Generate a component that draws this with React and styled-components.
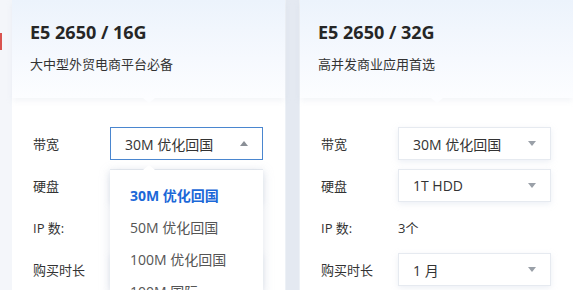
import styled, { createGlobalStyle } from "styled-components";

const GlobalStyle = createGlobalStyle`
  html, body {
    margin: 0;
    padding: 0;
    background: #f4f6fa;
  }
  body {
    font-family: "Open Sans", "Noto Sans CJK SC", sans-serif;
    color: #333;
  }
`;

const Page = styled.div`
  display: flex;
  height: 290px;
  width: 573px;
  overflow: hidden;
  background: #f4f6fa;
`;

const Gutter = styled.div`
  width: 12px;
  flex-shrink: 0;
  padding-top: 33px;
`;

const Tag = styled.div`
  width: 2px;
  height: 17px;
  background: #d9534f;
`;

const Divider = styled.div`
  width: 15px;
  flex-shrink: 0;
  background: #e4e9f1;
  box-shadow: inset 1px 0 0 #edf1f6, inset -1px 0 0 #edf1f6;
`;

const Card = styled.div`
  width: 273px;
  flex-shrink: 0;
  background: #fff;
  display: flex;
  flex-direction: column;
`;

const Header = styled.div`
  position: relative;
  height: 98px;
  box-sizing: border-box;
  padding: 20px 18px 0;
  background: linear-gradient(180deg, #ecf3fc 0%, #f6f9fe 60%, #fcfdff 100%);
  box-shadow: 0 3px 6px rgba(190, 200, 215, 0.18);
  z-index: 1;

  &::after {
    content: "";
    position: absolute;
    left: 50%;
    bottom: -5px;
    margin-left: -6px;
    border-left: 6px solid transparent;
    border-right: 6px solid transparent;
    border-top: 5px solid #fcfdff;
  }
`;

const Title = styled.h3`
  margin: 0;
  font-size: 18px;
  font-weight: 700;
  line-height: 24px;
  color: #262626;
`;

const Subtitle = styled.p`
  margin: 10px 0 0;
  font-size: 13px;
  line-height: 20px;
  color: #333;
`;

const Body = styled.div`
  padding: 29px 21px 0;
  display: flex;
  flex-direction: column;
  gap: 9px;
`;

const Row = styled.div`
  display: flex;
  align-items: center;
  height: 33px;
`;

const Label = styled.span`
  width: 77px;
  flex-shrink: 0;
  font-size: 13px;
  color: #333;
`;

const Value = styled.span`
  font-size: 13px;
  color: #333;
`;

const SelectWrap = styled.div`
  position: relative;
  width: 153px;
  height: 33px;
`;

const SelectBox = styled.div`
  box-sizing: border-box;
  height: 100%;
  display: flex;
  align-items: center;
  justify-content: space-between;
  padding: 0 14px 0 14px;
  font-size: 14px;
  color: #333;
  background: #fff;
  border: 1px solid ${p => (p.$open ? "#4a86cf" : "#e6eaf0")};
  box-shadow: ${p => (p.$open ? "none" : "0 2px 6px rgba(200, 210, 225, 0.35)")};
`;

const Caret = styled.span`
  width: 0;
  height: 0;
  border-left: 4px solid transparent;
  border-right: 4px solid transparent;
  ${p =>
    p.$up
      ? "border-bottom: 5px solid #8a8f96;"
      : "border-top: 5px solid #9aa0a8;"}
`;

const Dropdown = styled.div`
  position: absolute;
  top: 43px;
  left: 0;
  width: 100%;
  box-sizing: border-box;
  padding: 9px 0;
  background: #fff;
  box-shadow: 0 2px 10px rgba(170, 180, 200, 0.35);
  z-index: 5;

  &::before {
    content: "";
    position: absolute;
    top: -5px;
    left: 33px;
    border-left: 6px solid transparent;
    border-right: 6px solid transparent;
    border-bottom: 5px solid #fff;
  }
`;

const Option = styled.div`
  height: 32px;
  display: flex;
  align-items: center;
  padding-left: 20px;
  font-size: 14px;
  white-space: nowrap;
  color: ${p => (p.$active ? "#1b68d8" : "#555")};
  font-weight: ${p => (p.$active ? 700 : 400)};
`;

function Select({ value, open, options = [] }) {
  return (
    <SelectWrap>
      <SelectBox $open={open}>
        <span>{value}</span>
        <Caret $up={open} />
      </SelectBox>
      {open && (
        <Dropdown>
          {options.map(o => (
            <Option key={o} $active={o === value}>
              {o}
            </Option>
          ))}
        </Dropdown>
      )}
    </SelectWrap>
  );
}

const bandwidth = ["30M 优化回国", "50M 优化回国", "100M 优化回国", "100M 国际"];

function Plan({ title, desc, disk, ip, open }) {
  return (
    <Card>
      <Header>
        <Title>{title}</Title>
        <Subtitle>{desc}</Subtitle>
      </Header>
      <Body>
        <Row>
          <Label>带宽</Label>
          <Select value="30M 优化回国" open={open} options={bandwidth} />
        </Row>
        <Row>
          <Label>硬盘</Label>
          <Select value={disk} />
        </Row>
        <Row>
          <Label>IP 数:</Label>
          <Value>{ip}</Value>
        </Row>
        <Row>
          <Label>购买时长</Label>
          <Select value="1 月" />
        </Row>
      </Body>
    </Card>
  );
}

export default function App() {
  return (
    <>
      <GlobalStyle />
      <Page>
        <Gutter>
          <Tag />
        </Gutter>
        <Plan title="E5 2650 / 16G" desc="大中型外贸电商平台必备" disk="1T HDD" ip="3个" open />
        <Divider />
        <Plan title="E5 2650 / 32G" desc="高并发商业应用首选" disk="1T HDD" ip="3个" />
      </Page>
    </>
  );
}
